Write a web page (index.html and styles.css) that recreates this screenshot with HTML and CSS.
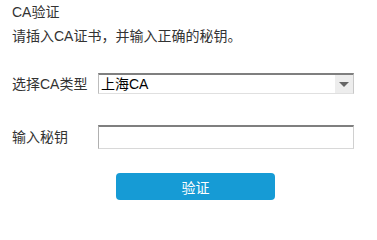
FILE: index.html
```html
<!DOCTYPE html>
<html lang="zh-CN">
<head>
<meta charset="utf-8">
<title>CA验证</title>
<link rel="stylesheet" href="styles.css">
</head>
<body>
<div class="page">
  <div class="title">CA验证</div>
  <div class="desc">请插入CA证书，并输入正确的秘钥。</div>
  <div class="row row-select">
    <label class="label">选择CA类型</label>
    <div class="select-wrap">
      <select class="select">
        <option>上海CA</option>
      </select>
      <span class="arrow"><span class="tri"></span></span>
    </div>
  </div>
  <div class="row row-input">
    <label class="label">输入秘钥</label>
    <input class="input" type="password">
  </div>
  <div class="actions">
    <button class="btn">验证</button>
  </div>
</div>
</body>
</html>
```

FILE: styles.css
```css
html, body {
  margin: 0;
  padding: 0;
  background: #fff;
}
body {
  font-family: "Liberation Sans", Arial, "Noto Sans CJK SC", sans-serif;
  font-size: 14px;
  color: #333;
}
.page {
  padding: 0 0 0 12px;
  width: 343px;
}
.title {
  line-height: 20px;
  padding-top: 2px;
}
.desc {
  line-height: 20px;
  margin-top: 4px;
}
.row {
  display: flex;
  align-items: center;
}
.row-select {
  margin-top: 27px;
}
.row-input {
  margin-top: 31px;
}
.label {
  width: 86px;
  flex: none;
  line-height: 20px;
}
.select-wrap {
  position: relative;
  width: 256px;
  height: 21px;
}
.select {
  appearance: none;
  -webkit-appearance: none;
  box-sizing: border-box;
  width: 100%;
  height: 100%;
  margin: 0;
  padding: 0 0 0 2px;
  border: 1px solid;
  border-color: #7f7f7f #c8c8c8 #e0e0e0 #bdbdbd;
  border-top-width: 2px;
  border-radius: 0;
  background: #fff;
  font: inherit;
  font-size: 14px;
  color: #000;
  outline: none;
}
.arrow {
  position: absolute;
  top: 2px;
  right: 1px;
  bottom: 1px;
  width: 18px;
  background: #ededed;
  display: flex;
  align-items: center;
  justify-content: center;
}
.tri {
  width: 0;
  height: 0;
  border-left: 5px solid transparent;
  border-right: 5px solid transparent;
  border-top: 5px solid #666;
}
.input {
  box-sizing: border-box;
  width: 256px;
  height: 24px;
  margin: 0;
  padding: 0 3px;
  border: 1px solid;
  border-color: #7f7f7f #d0d0d0 #d8d8d8 #b0b0b0;
  border-top-width: 2px;
  background: #fff;
  font: inherit;
  outline: none;
}
.actions {
  margin-top: 24px;
  padding-left: 104px;
}
.btn {
  display: block;
  width: 159px;
  height: 27px;
  border: 0;
  border-radius: 4px;
  background: #169bd5;
  color: #fff;
  font-family: "Noto Sans CJK SC", sans-serif;
  font-size: 14px;
  padding: 0;
}
```
